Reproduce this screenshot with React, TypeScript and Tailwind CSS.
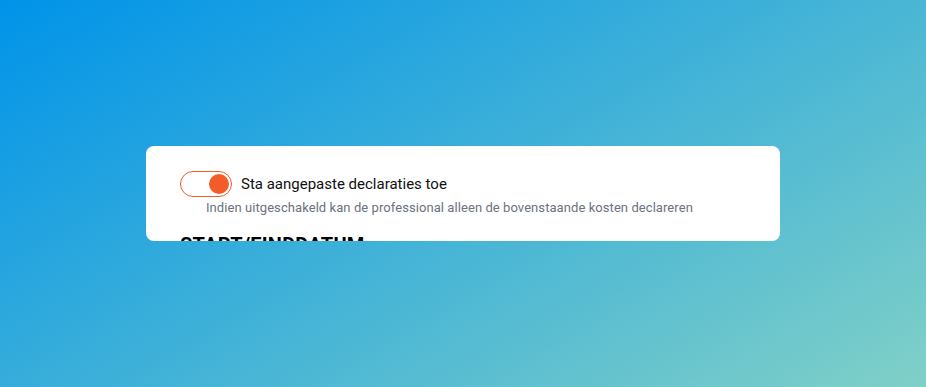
import { useState } from 'react';

/**
 * Settings card – toggle for custom declarations, shown on a gradient page.
 */
export default function App() {
  const [allowCustom, setAllowCustom] = useState(true);

  return (
    <div
      className="w-full h-[387px] flex items-center justify-center bg-[#0093E9] bg-linear-[150deg] from-[#0093E9] to-[#80D0C7]"
      style={{ fontFamily: 'Roboto, "Liberation Sans", sans-serif' }}
    >
      <div className="w-[634px] h-[95px] bg-white rounded-lg overflow-hidden pl-[34px] pr-8 pt-[25px]">
        {/* Toggle row */}
        <div className="flex items-center gap-[9px]">
          <button
            onClick={() => setAllowCustom((v) => !v)}
            className={`w-[52px] h-[26px] rounded-full border border-[#f45b2a] bg-white flex items-center px-[2px] ${
              allowCustom ? 'justify-end' : 'justify-start'
            }`}
          >
            <span className="w-5 h-5 rounded-full bg-[#f45b2a] block" />
          </button>
          <span className="text-[15px] text-[#111] leading-5">Sta aangepaste declaraties toe</span>
        </div>
        <p className="ml-[26px] mt-[1px] text-[13px] tracking-[0.07px] leading-5 text-[#6b7280]">
          Indien uitgeschakeld kan de professional alleen de bovenstaande kosten declareren
        </p>

        {/* Next section, clipped by the card */}
        <h3 className="mt-[15px] text-[20px] font-bold uppercase tracking-[0.2px] text-black leading-6">
          Start/Einddatum
        </h3>
      </div>
    </div>
  );
}
